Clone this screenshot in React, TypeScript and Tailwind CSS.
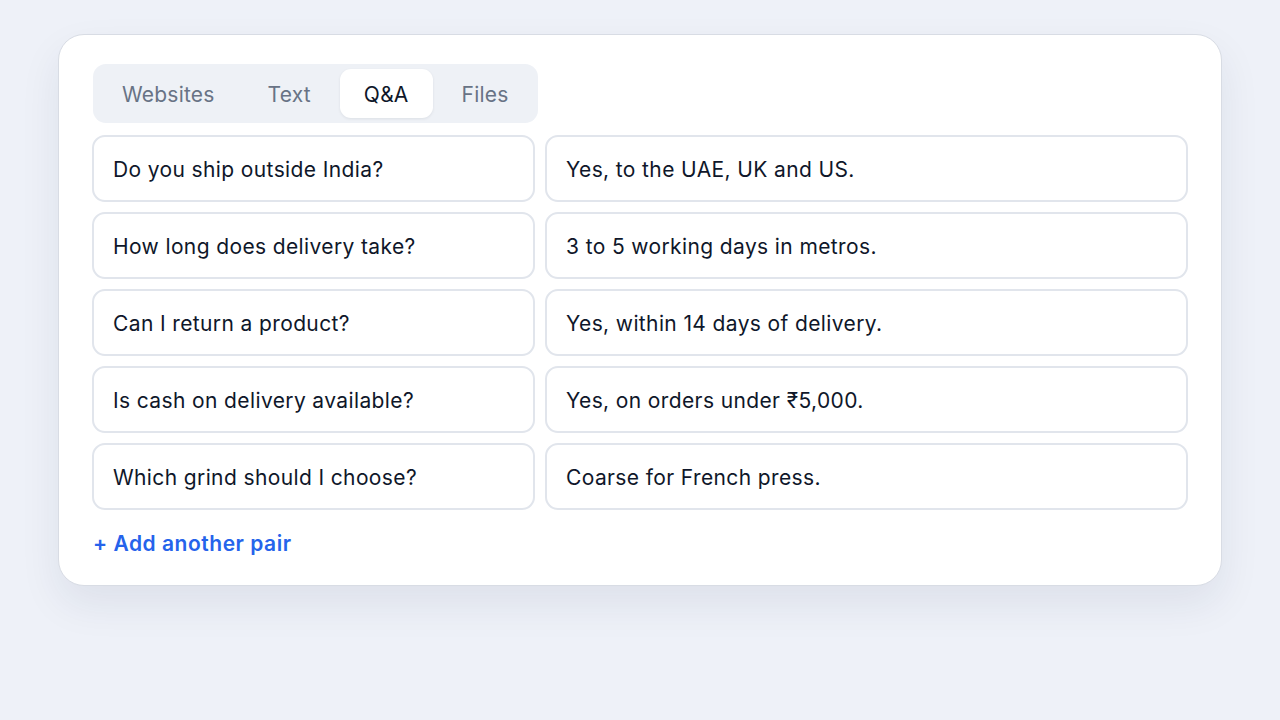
import { useState } from "react";

const tabs = ["Websites", "Text", "Q&A", "Files"];

const pairs = [
    { q: "Do you ship outside India?", a: "Yes, to the UAE, UK and US." },
    { q: "How long does delivery take?", a: "3 to 5 working days in metros." },
    { q: "Can I return a product?", a: "Yes, within 14 days of delivery." },
    { q: "Is cash on delivery available?", a: "Yes, on orders under ₹5,000." },
    { q: "Which grind should I choose?", a: "Coarse for French press." },
];

export default function App() {
    const [active, setActive] = useState("Q&A");

    return (
        <div className="min-h-screen w-full bg-[#eef1f8] pt-[34px] font-['Inter',sans-serif]">
            <div className="mx-auto w-[1164px] rounded-[26px] border border-[#d8dce4] bg-white px-[33px] pt-[29px] pb-[26px] shadow-[0_18px_40px_rgba(30,41,80,0.08)]">
                <div className="ml-px inline-flex gap-[5px] rounded-[13px] bg-[#eef1f6] p-[5px]">
                    {tabs.map((tab) => (
                        <button
                            key={tab}
                            onClick={() => setActive(tab)}
                            className={
                                tab === active
                                    ? "h-[49px] rounded-[11px] bg-white px-6 pt-[2px] text-[21px] leading-[30px] tracking-[0.01em] text-[#0f172a] shadow-[0_1px_3px_rgba(15,23,42,0.08)]"
                                    : "h-[49px] rounded-[11px] px-6 pt-[2px] text-[21px] leading-[30px] tracking-[0.01em] text-[#687385]"
                            }
                        >
                            {tab}
                        </button>
                    ))}
                </div>

                <div className="mt-[12px] flex flex-col gap-[10px]">
                    {pairs.map((p) => (
                        <div key={p.q} className="grid grid-cols-[443px_1fr] gap-[10px]">
                            <div className="flex h-[67px] items-center rounded-[13px] border-2 border-[#e1e5ec] px-[19px] pt-[2px] text-[21px] tracking-[0.018em] text-[#0f172a]">
                                {p.q}
                            </div>
                            <div className="flex h-[67px] items-center rounded-[13px] border-2 border-[#e1e5ec] px-[19px] pt-[2px] text-[21px] tracking-[0.018em] text-[#0f172a]">
                                {p.a}
                            </div>
                        </div>
                    ))}
                </div>

                <button className="mt-[19px] ml-px text-[21px] leading-[30px] font-semibold tracking-[0.025em] text-[#2563eb]">
                    + Add another pair
                </button>
            </div>
        </div>
    );
}
